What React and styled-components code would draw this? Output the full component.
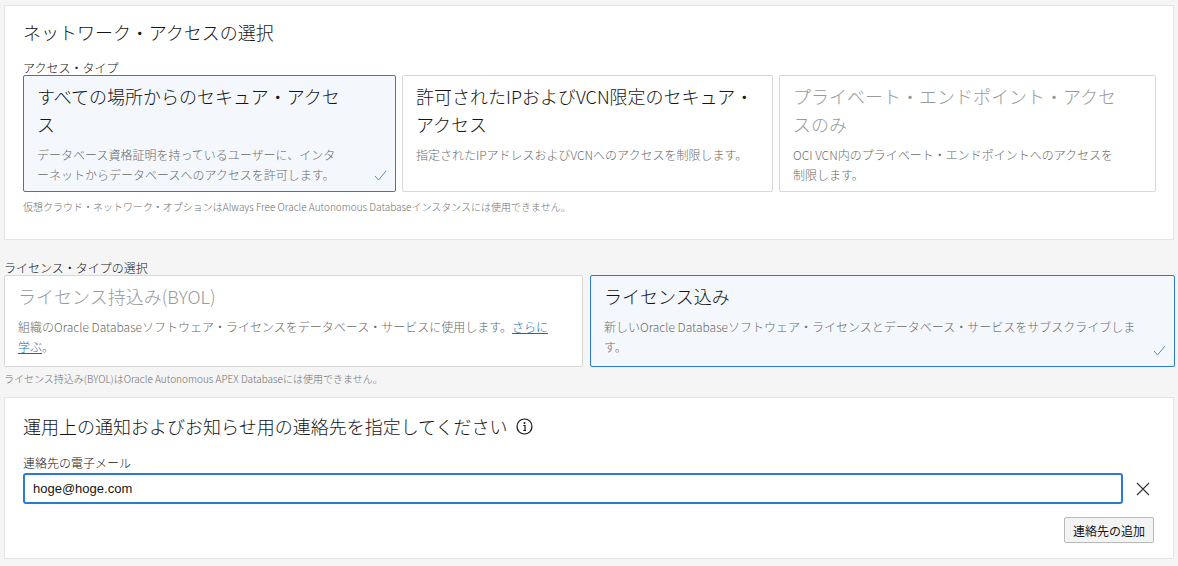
import React from "react";
import styled, { createGlobalStyle } from "styled-components";

const Global = createGlobalStyle`
  body {
    margin: 0;
    background: #f5f5f5;
    font-family: "Noto Sans CJK JP", "Liberation Sans", sans-serif;
    color: #161513;
  }
`;

const Page = styled.div`
  padding: 5px 4px 0 4px;
  width: 1170px;
`;

const Panel = styled.section`
  background: #fff;
  border: 1px solid #e4e4e4;
  padding: ${(p) => p.pad || "12px 18px 18px 18px"};
  margin-top: ${(p) => p.mt || 0}px;
  box-sizing: border-box;
  height: ${(p) => p.h}px;
`;

const Title = styled.h2`
  margin: 0;
  font-size: 18px;
  font-weight: 300;
  line-height: 28px;
  display: flex;
  align-items: center;
  gap: 8px;
`;

const Label = styled.div`
  font-size: 12px;
  line-height: 14px;
  font-weight: 300;
  margin-top: ${(p) => p.mt || 0}px;
`;

const Cards = styled.div`
  display: grid;
  grid-template-columns: ${(p) => p.cols};
  gap: ${(p) => p.gap}px;
`;

const Card = styled.div`
  position: relative;
  border: 1px solid ${(p) => (p.selected ? "#2b7bd0" : "#d8d8d8")};
  background: ${(p) => (p.selected ? "#f4f8fd" : "#fff")};
  border-radius: 2px;
  padding: 6px ${(p) => p.pr || 40}px 8px 13px;
  height: ${(p) => p.h}px;
  box-sizing: border-box;
`;

const CardTitle = styled.div`
  font-size: 18px;
  font-weight: 300;
  line-height: 28px;
  color: ${(p) => (p.disabled ? "#9a9a9a" : "#161513")};
  margin-bottom: 7px;
`;

const CardText = styled.div`
  font-size: 12px;
  font-weight: 300;
  line-height: 20px;
  color: #6a6a6a;
  a {
    color: #0a6dc2;
    text-decoration: underline;
  }
`;

const Check = styled.svg`
  position: absolute;
  right: 8px;
  bottom: 10px;
`;

const Note = styled.div`
  font-size: 10px;
  font-weight: 300;
  color: #6f6f6f;
  margin-top: ${(p) => p.mt}px;
  line-height: 14px;
`;

const Row = styled.div`
  display: flex;
  align-items: center;
  gap: 13px;
  margin-top: 3px;
`;

const Input = styled.input`
  flex: 1;
  height: 31px;
  box-sizing: border-box;
  border: 2px solid #2b7bd0;
  border-radius: 3px;
  padding: 0 8px;
  font-family: "Liberation Sans", sans-serif;
  font-size: 13px;
  color: #161513;
  outline: none;
`;

const Actions = styled.div`
  display: flex;
  justify-content: flex-end;
  margin-top: 13px;
  padding-right: 1px;
`;

const Button = styled.button`
  height: 26px;
  padding: 0 8px;
  border: 1px solid #b9b9b9;
  border-radius: 2px;
  background: #f3f3f3;
  font-family: "Noto Sans CJK JP", sans-serif;
  font-size: 12px;
  color: #161513;
`;

const CheckMark = () => (
  <Check width="13" height="11" viewBox="0 0 13 11">
    <path d="M1 6 L4.5 10 L12 1" fill="none" stroke="#4a90d6" strokeWidth="1" />
  </Check>
);

export default function App() {
  return (
    <>
      <Global />
      <Page>
        <Panel h={235}>
          <Title>ネットワーク・アクセスの選択</Title>
          <Label mt={15}>アクセス・タイプ</Label>
          <Cards cols="373px 371px 377px" gap={6}>
            <Card selected h={117} pr={48}>
              <CardTitle>すべての場所からのセキュア・アクセス</CardTitle>
              <CardText>
                データベース資格証明を持っているユーザーに、インターネットからデータベースへのアクセスを許可します。
              </CardText>
              <CheckMark />
            </Card>
            <Card h={117} pr={13}>
              <CardTitle>許可されたIPおよびVCN限定のセキュア・アクセス</CardTitle>
              <CardText>指定されたIPアドレスおよびVCNへのアクセスを制限します。</CardText>
            </Card>
            <Card h={117} pr={30}>
              <CardTitle disabled>プライベート・エンドポイント・アクセスのみ</CardTitle>
              <CardText>OCI VCN内のプライベート・エンドポイントへのアクセスを制限します。</CardText>
            </Card>
          </Cards>
          <Note mt={8}>
            仮想クラウド・ネットワーク・オプションはAlways Free Oracle Autonomous Databaseインスタンスには使用できません。
          </Note>
        </Panel>

        <Label mt={21}>ライセンス・タイプの選択</Label>
        <Cards cols="579px 585px" gap={7}>
          <Card h={92} pr={30}>
            <CardTitle disabled>ライセンス持込み(BYOL)</CardTitle>
            <CardText>
              組織のOracle Databaseソフトウェア・ライセンスをデータベース・サービスに使用します。<a href="#">さらに学ぶ</a>。
            </CardText>
          </Card>
          <Card selected h={92} pr={30}>
            <CardTitle>ライセンス込み</CardTitle>
            <CardText>
              新しいOracle Databaseソフトウェア・ライセンスとデータベース・サービスをサブスクライブします。
            </CardText>
            <CheckMark />
          </Card>
        </Cards>
        <Note mt={5}>ライセンス持込み(BYOL)はOracle Autonomous APEX Databaseには使用できません。</Note>

        <Panel h={162} pad="14px 18px 14px 18px" mt={11}>
          <Title>
            運用上の通知およびお知らせ用の連絡先を指定してください
            <svg width="17" height="17" viewBox="0 0 17 17">
              <circle cx="8.5" cy="8.5" r="7.5" fill="none" stroke="#161513" strokeWidth="1.2" />
              <circle cx="8.5" cy="5" r="1" fill="#161513" />
              <path d="M7.3 7.5 H9 V12.5 M7.3 12.5 H10" fill="none" stroke="#161513" strokeWidth="1.2" />
            </svg>
          </Title>
          <Label mt={16}>連絡先の電子メール</Label>
          <Row>
            <Input defaultValue="hoge@hoge.com" />
            <svg width="14" height="14" viewBox="0 0 14 14" style={{ marginRight: 5 }}>
              <path d="M1 1 L13 13 M13 1 L1 13" stroke="#333" strokeWidth="1.1" />
            </svg>
          </Row>
          <Actions>
            <Button>連絡先の追加</Button>
          </Actions>
        </Panel>
      </Page>
    </>
  );
}
